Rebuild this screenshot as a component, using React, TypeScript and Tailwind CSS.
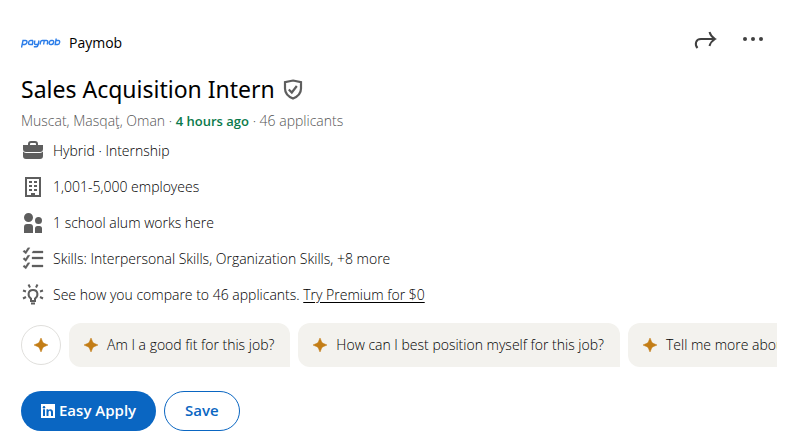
import type { ReactNode } from "react";

function Spark() {
  return (
    <svg aria-hidden="true" viewBox="0 0 16 16" className="size-4 shrink-0 fill-[#c37d16]">
      <path d="M8 1l1.7 3.900a2.600 2.600 0 0 0 1.400 1.400L15 8l-3.900 1.700a2.600 2.600 0 0 0-1.400 1.400L8 15l-1.700-3.900a2.600 2.600 0 0 0-1.400-1.400L1 8l3.900-1.700a2.600 2.600 0 0 0 1.400-1.400z" className="stroke-[#c37d16] stroke-[0.5]" />
    </svg>
  );
}

function Row({ icon, children }: { icon: ReactNode; children: ReactNode }) {
  return (
    <li className="flex h-6 items-center gap-2">
      <svg aria-hidden="true" viewBox="0 0 24 24" className="size-6 shrink-0 fill-[#5e5e5e]">
        {icon}
      </svg>
      <span className="whitespace-nowrap">{children}</span>
    </li>
  );
}

const questions = [
  "Am I a good fit for this job?",
  "How can I best position myself for this job?",
  "Tell me more about this company",
];

export default function App() {
  return (
    <main className="bg-white px-[21px] pt-6 pb-2 font-['Open_Sans',sans-serif] text-sm font-light text-black">
      <header className="flex items-start justify-between">
        <div className="flex h-[38px] items-center gap-2">
          <svg role="img" aria-label="Paymob logo" viewBox="0 0 40 12" className="h-3 w-10 fill-none stroke-[#2b7de9] stroke-[1.4]">
            <path d="M.5 10.500L2 3.500H4.500Q6.300 3.500 5.900 5.300T3.900 7.500H1.300M12 3.500H9.500Q8 3.500 7.600 5.500T9 7.500H11.300L12 3.500M13.800 3.500L13.500 6Q13.300 7.500 14.600 7.500H17.200M18 3.500L17.200 7.500Q16.700 9.800 15.500 9.800H12.800M19 7.500L19.700 4.700Q20 3.500 21.200 3.500H25.500Q27 3.500 26.700 5L26.200 7.500M23.300 3.500L22.600 7.500M29.500 3.500H31.400Q33 3.500 32.600 5.500T30.600 7.500H29.500Q27.900 7.500 28.300 5.500T30 3.500M35.200 1.500L34.200 7.500H36.800Q38.300 7.500 38.600 5.500T37.600 3.500H35" />
          </svg>
          <span className="font-medium">Paymob</span>
        </div>
        <div className="flex gap-6 pr-3">
          <button type="button" aria-label="Share" className="size-6 pt-1 text-[#404040]">
            <svg viewBox="0 0 24 24" className="size-6 fill-none stroke-current stroke-2">
              <path d="M4.500 20C1.500 16.500 2.500 11 8 11H22M16.500 4C17.500 7.500 19.500 9.500 22 11C19.500 12.500 17.500 14.500 16.500 18" />
            </svg>
          </button>
          <button type="button" aria-label="More options" className="h-[30px] w-6 text-[#404040]">
            <svg viewBox="0 0 24 24" className="size-6 fill-current">
              <circle cx="4" cy="12" r="2" />
              <circle cx="12" cy="12" r="2" />
              <circle cx="20" cy="12" r="2" />
            </svg>
          </button>
        </div>
      </header>

      <div className="mt-[7px] flex h-10 items-center gap-2">
        <h1 className="font-['Noto_Sans',sans-serif] text-[23px] font-normal whitespace-nowrap">Sales Acquisition Intern</h1>
        <svg role="img" aria-label="Verified job" viewBox="0 0 20 22" className="h-[22px] w-5 fill-none stroke-[#5e5e5e] stroke-[2.2]">
          <path d="M10 2.500L18 4.200V10.500C18 15.800 14.500 18.700 10 20.500C5.500 18.700 2 15.800 2 10.500V4.200ZM5.800 11.500L8.800 14.500L13.800 8" />
        </svg>
      </div>

      <p className="mt-px h-[22px] leading-[22px] whitespace-nowrap text-[#555555]">
        Muscat, Masqaţ, Oman · <strong className="text-[13px] font-semibold text-[#0b7a4b]">4 hours ago</strong> · 46 applicants
      </p>

      <ul className="mt-[7px] flex flex-col gap-3">
        <Row icon={<path d="M17 6V5a3 3 0 0 0-3-3h-4a3 3 0 0 0-3 3v1H2v4a3 3 0 0 0 3 3h14a3 3 0 0 0 3-3V6zM9 5a1 1 0 0 1 1-1h4a1 1 0 0 1 1 1v1H9zM19 14a4 4 0 0 0 3-1.380V17a3 3 0 0 1-3 3H5a3 3 0 0 1-3-3v-4.380A4 4 0 0 0 5 14z" />}>
          Hybrid · Internship
        </Row>
        <Row icon={<path d="M4 2v20h16V2zm14 18h-4v-2h-4v2H6V4h12zm-7-12H8V6h3zm0 4H8v-2h3zm0 4H8v-2h3zm5-8h-3V6h3zm0 4h-3v-2h3zm0 4h-3v-2h3z" />}>
          1,001-5,000 employees
        </Row>
        <Row icon={<path d="M12 16v6H3v-6a3 3 0 0 1 3-3h3a3 3 0 0 1 3 3zm5.500-3A3.500 3.500 0 1 0 14 9.500a3.500 3.500 0 0 0 3.500 3.500zm1 2h-2a2.500 2.500 0 0 0-2.500 2.500V22h7v-4.500a2.500 2.500 0 0 0-2.500-2.500zM7.500 2A4.500 4.500 0 1 0 12 6.500 4.490 4.490 0 0 0 7.500 2z" />}>
          1 school alum works here
        </Row>
        <Row icon={<path d="M12 4h10v2H11zm-1 8h11v-2H11zm0 8h11v-2H11zM6.800 0.800L4.500 4.300 3.300 3.100 1.900 4.500l3 2.500L9 .8zm0 7.500l-2.300 3.500-1.200-1.200L1.900 12l3 2.500L9 8.300zm0 7.500l-2.300 3.500-1.200-1.200-1.400 1.400 3 2.500L9 15.800z" className="stroke-[#5e5e5e] stroke-[0.3]" />}>
          Skills: Interpersonal Skills, Organization Skills, +8 more
        </Row>
        <Row
          icon={
            <g className="fill-none stroke-[#5e5e5e] stroke-2">
              <path d="M10 18V15.500C6.500 13.500 6.500 7 12 7S17.500 13.500 14 15.500V18ZM10 20.500H14M9 4.500L7.500 1.500M15 4.500L16.500 1.500M5 8.500L2 7.500M5 14L2 15.500M19 8.500L22 7.500M19 14L22 15.500" />
            </g>
          }
        >
          See how you compare to 46 applicants.{" "}
          <a href="#premium" className="underline underline-offset-2">Try Premium for $0</a>
        </Row>
      </ul>

      <div className="mt-4 flex items-center gap-2 overflow-hidden">
        <button type="button" aria-label="Assistant" className="flex size-10 shrink-0 items-center justify-center rounded-full border border-[#e0dfdc]">
          <Spark />
        </button>
        {questions.map((question) => (
          <button key={question} type="button" className="flex h-11 shrink-0 items-center gap-2 rounded-xl rounded-br-none bg-[#f3f2ee] pr-4 pl-[14px] whitespace-nowrap">
            <Spark />
            {question}
          </button>
        ))}
      </div>

      <div className="mt-6 flex gap-2 text-[15px] font-semibold">
        <button type="button" className="flex h-10 items-center gap-1 rounded-full bg-[#0a66c2] px-5 whitespace-nowrap text-white">
          <svg aria-hidden="true" viewBox="0 0 14 14" className="size-[14px]">
            <path fill="currentColor" d="M0 0H14V14H0Z" />
            <path className="fill-[#0a66c2]" d="M2 5.300H4V12H2ZM5.500 5.300H7.400V6.200C8.800 4.400 12 5 12 8V12H10V8.500C10 6.200 7.500 6.300 7.500 8.500V12H5.500Z" />
            <circle className="fill-[#0a66c2]" cx="3" cy="3.200" r="1.200" />
          </svg>
          Easy Apply
        </button>
        <button type="button" className="h-10 rounded-full border border-[#0a66c2] px-5 text-[#0a66c2]">Save</button>
      </div>
    </main>
  );
}
